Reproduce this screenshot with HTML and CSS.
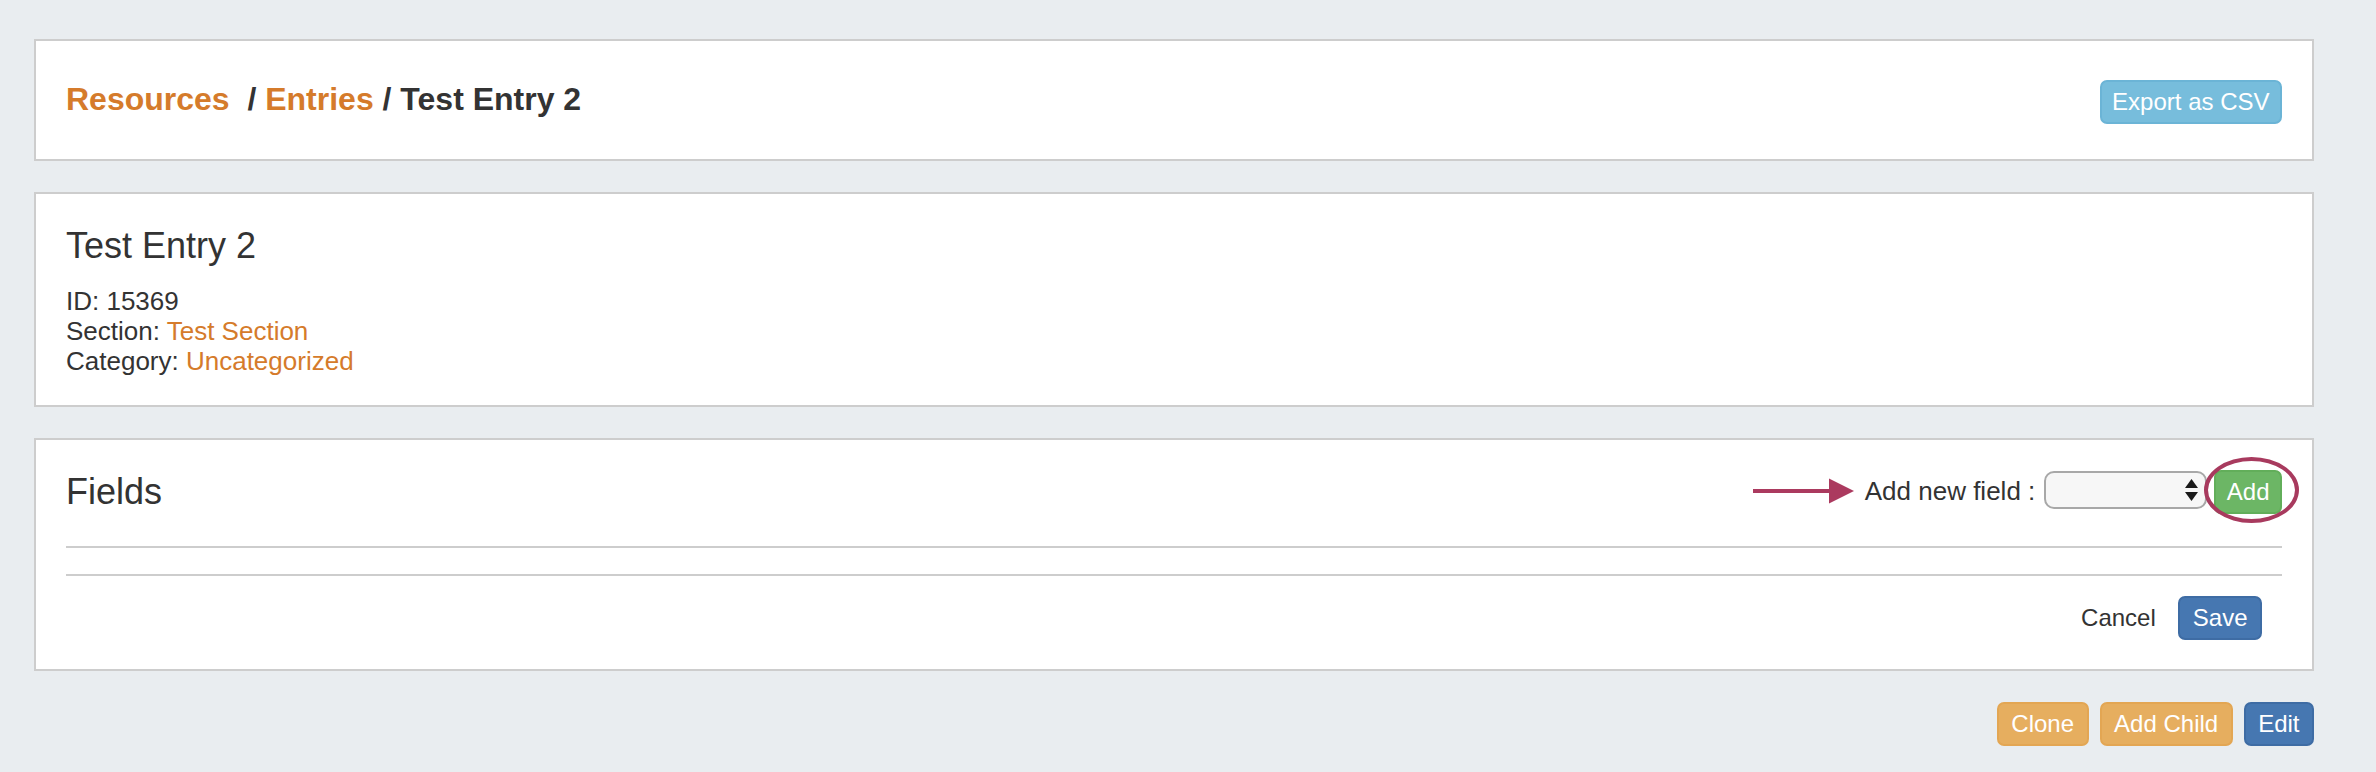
FILE: index.html
```html
<!DOCTYPE html>
<html lang="en">
<head>
<meta charset="utf-8">
<title>Test Entry 2</title>
<link rel="stylesheet" href="styles.css">
</head>
<body>
<div class="page">
  <section class="panel panel-head">
    <h1 class="crumbs"><a class="link" href="#">Resources</a>&nbsp; / <a class="link" href="#">Entries</a> / Test Entry 2</h1>
    <button class="btn btn-info">Export as CSV</button>
  </section>

  <section class="panel panel-entry">
    <h2 class="title">Test Entry 2</h2>
    <div class="meta">
      <div>ID: 15369</div>
      <div>Section: <a class="link" href="#">Test Section</a></div>
      <div>Category: <a class="link" href="#">Uncategorized</a></div>
    </div>
  </section>

  <section class="panel panel-fields">
    <div class="fields-head">
      <h2 class="title">Fields</h2>
      <div class="add-field">
        <svg class="pointer" width="101" height="26" viewBox="0 0 101 26" aria-hidden="true">
          <rect x="0" y="11" width="78" height="4" fill="#ab3a5f"/>
          <polygon points="76,0.5 101,13 76,25.5" fill="#ab3a5f"/>
        </svg>
        <span class="add-label">Add new field :</span>
        <div class="select">
          <svg width="13" height="22" viewBox="0 0 13 22" aria-hidden="true">
            <polygon points="6.5,0 13,9 0,9" fill="#1a1a1a"/>
            <polygon points="0,13 13,13 6.5,22" fill="#1a1a1a"/>
          </svg>
        </div>
        <span class="add-wrap">
          <button class="btn btn-success">Add</button>
          <span class="ring"></span>
        </span>
      </div>
    </div>
    <hr class="rule">
    <div class="field-list"></div>
    <hr class="rule">
    <div class="fields-foot">
      <button class="btn btn-link">Cancel</button>
      <button class="btn btn-primary btn-wide">Save</button>
    </div>
  </section>

  <div class="actions">
    <button class="btn btn-warning btn-wide">Clone</button>
    <button class="btn btn-warning btn-wide">Add Child</button>
    <button class="btn btn-primary btn-wide">Edit</button>
  </div>
</div>
</body>
</html>
```

FILE: styles.css
```css
* { box-sizing: border-box; }

html, body {
  margin: 0;
  padding: 0;
  background: #e9edf0;
}

body {
  font-family: "Liberation Sans", Arial, Helvetica, sans-serif;
  font-size: 26px;
  line-height: 30px;
  color: #333333;
}

.page {
  padding: 39px 62px 0 34px;
  width: 2376px;
  height: 772px;
}

.panel {
  background: #ffffff;
  border: 2px solid #cdcdcd;
  margin-bottom: 31px;
}

.link {
  color: #d57b2b;
  text-decoration: none;
}

/* header panel */
.panel-head {
  display: flex;
  justify-content: space-between;
  align-items: flex-start;
  padding: 39px 30px 35px 30px;
}

.crumbs {
  margin: 0;
  font-size: 32px;
  line-height: 39px;
  font-weight: bold;
  color: #333333;
}

/* entry panel */
.panel-entry {
  padding: 30px 30px 29px 30px;
}

.title {
  margin: 0;
  font-size: 36px;
  line-height: 44px;
  font-weight: normal;
  color: #333333;
}

.panel-entry .title {
  margin-bottom: 18px;
}

/* fields panel */
.panel-fields {
  padding: 30px 30px 29px 30px;
}

.fields-head {
  display: flex;
  justify-content: space-between;
  align-items: center;
  height: 44px;
  margin-bottom: 32px;
}

.add-field {
  display: flex;
  align-items: center;
}

.pointer {
  display: block;
  margin-right: 11px;
  margin-top: -2px;
}

.add-label {
  font-size: 26px;
  line-height: 30px;
  margin-right: 9px;
  margin-top: -2px;
}

.select {
  width: 163px;
  height: 38px;
  border: 2px solid #a8a8a8;
  border-radius: 10px;
  background: #f7f7f7;
  display: flex;
  align-items: center;
  justify-content: flex-end;
  padding-right: 7px;
  margin-right: 7px;
  margin-top: -4px;
}

.select svg { display: block; }

.add-wrap {
  position: relative;
  display: block;
}

.ring {
  position: absolute;
  left: -10px;
  top: -13px;
  width: 95px;
  height: 66px;
  border: 4px solid #a83a5e;
  border-radius: 50%;
  pointer-events: none;
}

.rule {
  margin: 0;
  border: 0;
  border-top: 2px solid #cdcdcd;
  height: 0;
}

.field-list {
  height: 26px;
}

.fields-foot {
  display: flex;
  justify-content: flex-end;
  gap: 10px;
  margin-top: 20px;
  padding-right: 20px;
}

/* buttons */
.btn {
  font-family: "Liberation Sans", Arial, Helvetica, sans-serif;
  font-size: 24px;
  line-height: 40px;
  height: 44px;
  padding: 0 10.5px;
  border: 2px solid transparent;
  border-radius: 7px;
  color: #ffffff;
  background: transparent;
  cursor: pointer;
  display: block;
  white-space: nowrap;
}

.btn-wide { padding: 0 12.5px; }

.btn-info {
  background: #77bddc;
  border-color: #6bb4d6;
}

.btn-success {
  background: #6cb665;
  border-color: #62ae5a;
}

.btn-primary {
  background: #4677b1;
  border-color: #3e6ca4;
}

.btn-warning {
  background: #e6ae5f;
  border-color: #e3a653;
}

.btn-link {
  color: #333333;
}

.actions {
  display: flex;
  justify-content: flex-end;
  gap: 11px;
}
```
